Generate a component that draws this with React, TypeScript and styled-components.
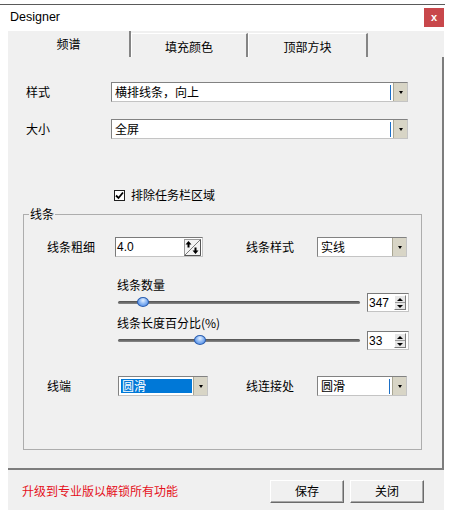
import React from 'react'
import styled, { createGlobalStyle } from 'styled-components'

const GlobalStyle = createGlobalStyle`
    html, body {
        margin: 0;
        padding: 0;
        background: #ffffff;
    }
    body {
        font-family: "Liberation Sans", "Noto Sans CJK SC", sans-serif;
        font-size: 12px;
        color: #000000;
    }
`

const Window = styled.div`
    width: 450px;
    height: 517px;
    display: flex;
    flex-direction: column;
`

const TitleBar = styled.div`
    margin-top: 4px;
    width: 445px;
    height: 27px;
    box-sizing: border-box;
    border-top: 1px solid #5a5a5a;
    background: #ffffff;
    display: flex;
    align-items: center;
    justify-content: space-between;
    padding: 0 1px 2px 10px;
`

const Title = styled.span`
    font-size: 12.5px;
    line-height: 16px;
`

const CloseButton = styled.div`
    width: 20px;
    height: 19px;
    background: #c8474b;
    color: #ffffff;
    font-size: 11px;
    font-weight: bold;
    line-height: 18px;
    text-align: center;
`

const Body = styled.div`
    margin-left: 8px;
    width: 436px;
    height: 479px;
    background: #f0f0f0;
    display: flex;
    flex-direction: column;
`

const TabStrip = styled.div`
    height: 26px;
    display: flex;
    align-items: flex-end;
`

const Tab = styled.div<{ $active?: boolean; $width: number }>`
    width: ${p => p.$width}px;
    height: ${p => (p.$active ? 26 : 24)}px;
    box-sizing: border-box;
    border-right: 2px solid #858585;
    border-top: ${p => (p.$active ? 'none' : '1px solid #ffffff')};
    border-left: ${p => (p.$active ? 'none' : '1px solid #ffffff')};
    display: flex;
    justify-content: center;
    padding-top: ${p => (p.$active ? 5 : 5)}px;
    font-family: "Noto Sans CJK SC", sans-serif;
    font-size: 12px;
    line-height: 16px;
`

const Panel = styled.div`
    height: 413px;
    box-sizing: border-box;
    border-right: 2px solid #7d7d7d;
    border-bottom: 2px solid #7d7d7d;
    padding: 25px 0 0 15px;
    display: flex;
    flex-direction: column;
`

const FieldRow = styled.div<{ $top?: number; $indent?: number }>`
    display: flex;
    align-items: center;
    height: 20px;
    margin-top: ${p => p.$top ?? 0}px;
    padding-left: ${p => p.$indent ?? 0}px;
`

const Label = styled.span<{ $width?: number; $left?: number }>`
    width: ${p => (p.$width ? `${p.$width}px` : 'auto')};
    margin-left: ${p => p.$left ?? 0}px;
    flex: none;
    font-family: "Noto Sans CJK SC", sans-serif;
    font-size: 12px;
    line-height: 16px;
`

const ComboBox = styled.div<{ $width: number }>`
    width: ${p => p.$width}px;
    height: 20px;
    flex: none;
    box-sizing: border-box;
    display: flex;
    background: #ffffff;
    border: 1px solid;
    border-color: #828282 #c4c4c4 #c4c4c4 #828282;
`

const ComboText = styled.div`
    flex: 1;
    display: flex;
    align-items: center;
    padding-left: 3px;
    font-family: "Noto Sans CJK SC", sans-serif;
    font-size: 12px;
    line-height: 16px;
`

const Selection = styled.span`
    flex: 1;
    margin: 0 1px 0 -1px;
    height: 14px;
    padding-left: 1px;
    background: #0078d7;
    color: #ffffff;
    display: flex;
    align-items: center;
`

const Caret = styled.span`
    width: 1px;
    height: 15px;
    margin-right: 2px;
    background: #1b6fc6;
`

const ArrowButton = styled.div`
    width: 13px;
    flex: none;
    background: #d8d5c6;
    border-left: 1px solid #aaa793;
    display: flex;
    align-items: center;
    justify-content: center;
`

const DownTriangle = styled.span`
    width: 0;
    height: 0;
    border-left: 2.5px solid transparent;
    border-right: 2.5px solid transparent;
    border-top: 3px solid #000000;
`

const CheckRow = styled.div`
    display: flex;
    align-items: center;
    height: 20px;
    margin: 46px 0 0 91px;
`

const CheckBox = styled.span`
    width: 11px;
    height: 11px;
    box-sizing: border-box;
    border: 1px solid #1f1f1f;
    background: #ffffff;
    display: flex;
    align-items: center;
    justify-content: center;
    margin-right: 6px;
`

const Group = styled.div`
    position: relative;
    margin-top: 9px;
    width: 399px;
    height: 236px;
    box-sizing: border-box;
    border: 1px solid #adadad;
    padding-top: 22px;
    display: flex;
    flex-direction: column;
`

const GroupTitle = styled.span`
    position: absolute;
    top: -9px;
    left: 5px;
    padding: 0 1px;
    background: #f0f0f0;
    font-family: "Noto Sans CJK SC", sans-serif;
    font-size: 12px;
    line-height: 16px;
`

const SpinField = styled.div<{ $width: number; $height: number }>`
    width: ${p => p.$width}px;
    height: ${p => p.$height}px;
    flex: none;
    box-sizing: border-box;
    display: flex;
    align-items: center;
    background: #ffffff;
    border: 1px solid;
    border-color: #7a7a7a #c4c4c4 #c4c4c4 #7a7a7a;
    padding-left: 1px;
    font-size: 12px;
`

const SpinValue = styled.span`
    flex: 1;
    line-height: 14px;
`

const SliderBlock = styled.div<{ $top: number }>`
    display: flex;
    flex-direction: column;
    padding-left: 93px;
    margin-top: ${p => p.$top}px;
`

const SliderCaption = styled.span`
    height: 16px;
    font-family: "Noto Sans CJK SC", "Liberation Sans", sans-serif;
    font-size: 12px;
    line-height: 16px;
`

const SliderRow = styled.div`
    display: flex;
    align-items: center;
    height: 19px;
`

const Track = styled.div`
    position: relative;
    width: 242px;
    height: 3px;
    margin: 0 7px 0 1px;
    border-radius: 2px;
    background: linear-gradient(#4e4e4e, #8a8a8a);
`

const Thumb = styled.span`
    position: absolute;
    top: -4px;
    width: 12px;
    height: 10px;
    margin-left: -6px;
    box-sizing: border-box;
    border-radius: 50%;
    border: 1px solid #2c5fb0;
    background: radial-gradient(circle at 50% 30%, #e6f1ff 0%, #8fbaf5 45%, #3a7ae0 100%);
`

const UpDown = styled.div`
    width: 12px;
    height: 15px;
    margin-right: 2px;
    display: flex;
    flex-direction: column;
    background: #e6e6e6;
    border: 1px solid;
    border-color: #ffffff #7a7a7a #7a7a7a #ffffff;
    box-sizing: border-box;
`

const UpDownHalf = styled.div<{ $up?: boolean }>`
    flex: 1;
    display: flex;
    align-items: center;
    justify-content: center;
    border-bottom: ${p => (p.$up ? '1px solid #9a9a9a' : 'none')};
`

const SmallTriangle = styled.span<{ $up?: boolean }>`
    width: 0;
    height: 0;
    border-left: 3px solid transparent;
    border-right: 3px solid transparent;
    ${p => (p.$up ? 'border-bottom: 3px solid #000;' : 'border-top: 3px solid #000;')}
`

const Footer = styled.div`
    flex: 1;
    display: flex;
    align-items: center;
    padding: 2px 20px 0 14px;
`

const Promo = styled.span`
    flex: 1;
    color: #e5101b;
    font-family: "Noto Sans CJK SC", sans-serif;
    font-size: 12px;
    line-height: 16px;
`

const Button = styled.div`
    width: 74px;
    height: 23px;
    box-sizing: border-box;
    margin-left: 6px;
    display: flex;
    align-items: center;
    justify-content: center;
    background: #f0f0f0;
    border: 1px solid;
    border-color: #ffffff #6b6b6b #6b6b6b #ffffff;
    box-shadow: inset -1px -1px 0 #a8a8a8;
    font-family: "Noto Sans CJK SC", sans-serif;
    font-size: 12px;
    line-height: 16px;
`

const Combo: React.FC<{ width: number; text: string; caret?: boolean; selected?: boolean }> = ({ width, text, caret, selected }) => (
    <ComboBox $width={width}>
        <ComboText>
            {selected ? <Selection>{text}</Selection> : <span style={{ flex: 1 }}>{text}</span>}
            {caret && <Caret />}
        </ComboText>
        <ArrowButton>
            <DownTriangle />
        </ArrowButton>
    </ComboBox>
)

const DiagonalSpin = () => (
    <svg width="17" height="17" viewBox="0 0 17 17" style={{ marginRight: 1 }}>
        <rect x="0.5" y="0.5" width="16" height="16" fill="#f4f4f4" stroke="#9a9a9a" />
        <path d="M16.5 0.5 V16.5 H0.5" fill="none" stroke="#555" />
        <path d="M1 16 L16 1" stroke="#7a7a7a" strokeWidth="1" />
        <path d="M4.5 2 L7.5 5.5 H5.5 V8.5 H3.5 V5.5 H1.5 Z" fill="#000" />
        <path d="M11.5 15 L8.5 11.5 H10.5 V8.5 H12.5 V11.5 H14.5 Z" fill="#000" />
    </svg>
)

const Slider: React.FC<{ caption: string; value: number; max: number; top: number }> = ({ caption, value, max, top }) => (
    <SliderBlock $top={top}>
        <SliderCaption>{caption}</SliderCaption>
        <SliderRow>
            <Track>
                <Thumb style={{ left: `${(value / max) * 100}%` }} />
            </Track>
            <SpinField $width={42} $height={19}>
                <SpinValue>{value}</SpinValue>
                <UpDown>
                    <UpDownHalf $up>
                        <SmallTriangle $up />
                    </UpDownHalf>
                    <UpDownHalf>
                        <SmallTriangle />
                    </UpDownHalf>
                </UpDown>
            </SpinField>
        </SliderRow>
    </SliderBlock>
)

const App: React.FC = () => {
    return (
        <Window>
            <GlobalStyle />
            <TitleBar>
                <Title>Designer</Title>
                <CloseButton>x</CloseButton>
            </TitleBar>
            <Body>
                <TabStrip>
                    <Tab $active $width={123}>频谱</Tab>
                    <Tab $width={117}>填充颜色</Tab>
                    <Tab $width={120}>顶部方块</Tab>
                </TabStrip>
                <Panel>
                    <FieldRow $indent={3}>
                        <Label $width={85}>样式</Label>
                        <Combo width={297} text="横排线条，向上" caret />
                    </FieldRow>
                    <FieldRow $indent={3} $top={17}>
                        <Label $width={85}>大小</Label>
                        <Combo width={297} text="全屏" caret />
                    </FieldRow>
                    <CheckRow>
                        <CheckBox>
                            <svg width="9" height="9" viewBox="0 0 9 9">
                                <path d="M1 4.5 L3.5 7 L8 1.5" fill="none" stroke="#000" strokeWidth="1.8" />
                            </svg>
                        </CheckBox>
                        <Label>排除任务栏区域</Label>
                    </CheckRow>
                    <Group>
                        <GroupTitle>线条</GroupTitle>
                        <FieldRow $indent={23}>
                            <Label $width={68}>线条粗细</Label>
                            <SpinField $width={88} $height={20}>
                                <SpinValue>4.0</SpinValue>
                                <DiagonalSpin />
                            </SpinField>
                            <Label $width={71} $left={43}>线条样式</Label>
                            <Combo width={90} text="实线" />
                        </FieldRow>
                        <Slider caption="线条数量" value={347} max={3380} top={20} />
                        <Slider caption="线条长度百分比(%)" value={33} max={97} top={3} />
                        <FieldRow $indent={23} $top={26}>
                            <Label $width={71}>线端</Label>
                            <Combo width={90} text="圆滑" selected />
                            <Label $width={71} $left={38}>线连接处</Label>
                            <Combo width={90} text="圆滑" caret />
                        </FieldRow>
                    </Group>
                </Panel>
                <Footer>
                    <Promo>升级到专业版以解锁所有功能</Promo>
                    <Button>保存</Button>
                    <Button>关闭</Button>
                </Footer>
            </Body>
        </Window>
    )
}

export default App
